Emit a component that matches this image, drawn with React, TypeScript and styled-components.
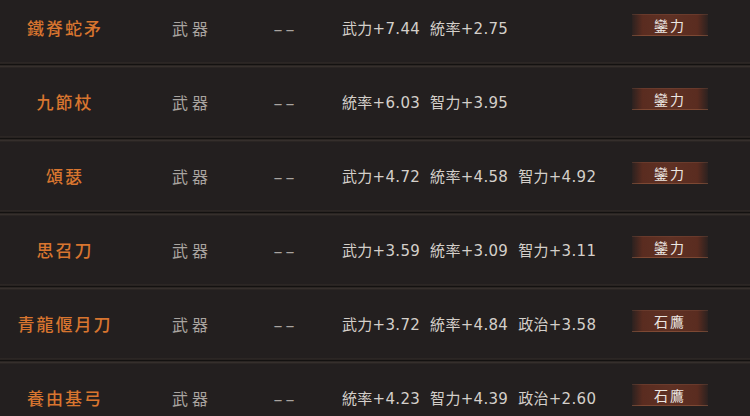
import { FC, ReactElement } from "react";
import styled, { createGlobalStyle } from "styled-components";

type Item = {
  name: string;
  kind: string;
  slot: string;
  stats: string[];
  source: string;
};

const items: Item[] = [
  { name: "鐵脊蛇矛", kind: "武器", slot: "––", stats: ["武力+7.44", "統率+2.75"], source: "鑾力" },
  { name: "九節杖", kind: "武器", slot: "––", stats: ["統率+6.03", "智力+3.95"], source: "鑾力" },
  { name: "頌瑟", kind: "武器", slot: "––", stats: ["武力+4.72", "統率+4.58", "智力+4.92"], source: "鑾力" },
  { name: "思召刀", kind: "武器", slot: "––", stats: ["武力+3.59", "統率+3.09", "智力+3.11"], source: "鑾力" },
  { name: "青龍偃月刀", kind: "武器", slot: "––", stats: ["武力+3.72", "統率+4.84", "政治+3.58"], source: "石鷹" },
  { name: "養由基弓", kind: "武器", slot: "––", stats: ["統率+4.23", "智力+4.39", "政治+2.60"], source: "石鷹" },
];

const GlobalStyle = createGlobalStyle`
  html, body {
    margin: 0;
    padding: 0;
    background: #231f1f;
    overflow: hidden;
  }
  body {
    font-family: "DejaVu Sans", "Noto Sans CJK TC", sans-serif;
  }
`;

const App: FC = (): ReactElement => {
  return (
    <>
      <GlobalStyle />
      <List>
        {items.map((it, i) => (
          <div key={it.name}>
            {i > 0 && <Divider />}
            <Row>
              <Name>{it.name}</Name>
              <Kind>{it.kind}</Kind>
              <Slot>{it.slot}</Slot>
              <Stats>
                {it.stats.map((s) => (
                  <span key={s}>{s}</span>
                ))}
              </Stats>
              <Source>{it.source}</Source>
            </Row>
          </div>
        ))}
      </List>
    </>
  );
};

const List = styled.div`
  width: 750px;
  height: 416px;
  overflow: hidden;
  background: #231f1f;
  display: flex;
  flex-direction: column;
  margin-top: -6px;
`;

const Divider = styled.div`
  height: 6px;
  background: linear-gradient(
    to bottom,
    #1b1817 0px,
    #3d3532 1px,
    #131110 2px,
    #131110 3px,
    #413935 4px,
    #2a2523 5px
  );
`;

const Row = styled.div`
  height: 68px;
  display: grid;
  grid-template-columns: 130px 120px 68px 314px 76px;
  align-items: center;
  background: #231f1f;
`;

const Name = styled.div`
  text-align: center;
  font-family: "Noto Sans CJK TC", sans-serif;
  font-size: 17px;
  font-weight: 500;
  letter-spacing: 2px;
  color: #d8752f;
  margin-top: -2px;
`;

const Kind = styled.div`
  text-align: center;
  font-family: "Noto Sans CJK TC", sans-serif;
  font-size: 16px;
  letter-spacing: 4px;
  padding-left: 4px;
  color: #a9a4a0;
`;

const Slot = styled.div`
  text-align: center;
  font-size: 18px;
  letter-spacing: 3px;
  padding-left: 3px;
  color: #a9a4a0;
`;

const Stats = styled.div`
  padding-left: 24px;
  display: flex;
  gap: 10px;
  font-size: 15px;
  letter-spacing: 0.3px;
  color: #d4cfca;
  white-space: nowrap;
  margin-top: -2px;
`;

const Source = styled.div`
  height: 20px;
  display: flex;
  align-items: center;
  justify-content: center;
  font-family: "Noto Sans CJK TC", sans-serif;
  font-size: 14px;
  letter-spacing: 2px;
  color: #ece7e2;
  background: linear-gradient(
    to right,
    rgba(92, 46, 34, 0.15) 0%,
    #5a2c20 14%,
    #5f3124 50%,
    #5a2c20 86%,
    rgba(92, 46, 34, 0.15) 100%
  );
  border-top: 1px solid rgba(140, 90, 70, 0.3);
  border-bottom: 1px solid rgba(160, 100, 70, 0.5);
  margin-top: -6px;
`;

export default App;
